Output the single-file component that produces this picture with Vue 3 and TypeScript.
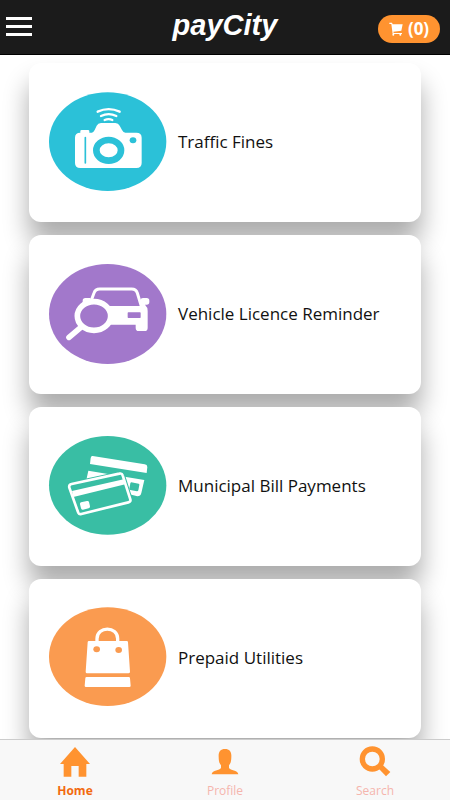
<script setup lang="ts">
import { ref } from 'vue'

interface Service {
  id: string
  title: string
  color: string
  viewBox: string
  cx: number
  cy: number
  rx: number
  ry: number
}

const services: Service[] = [
  { id: 'fines', title: 'Traffic Fines', color: '#2bc1d8', viewBox: '27 24 354 297', cx: 203, cy: 170, rx: 176, ry: 148 },
  { id: 'licence', title: 'Vehicle Licence Reminder', color: '#a278cb', viewBox: '27 30 354 297', cx: 203, cy: 177, rx: 176, ry: 150 },
  { id: 'bills', title: 'Municipal Bill Payments', color: '#39bea4', viewBox: '27 27 354 297', cx: 203, cy: 172, rx: 176, ry: 148 },
  { id: 'prepaid', title: 'Prepaid Utilities', color: '#fa9b50', viewBox: '27 27 354 297', cx: 203, cy: 170, rx: 176, ry: 148 },
]

const tabs = ['Home', 'Profile', 'Search']
const activeTab = ref('Home')
const cartCount = ref(0)
</script>

<template>
  <div class="app">
    <header class="topbar">
      <button class="menu" type="button" aria-label="Menu">
        <span></span><span></span><span></span>
      </button>
      <h1 class="brand">payCity</h1>
      <button class="cart" type="button" aria-label="Cart">
        <svg class="cart-icon" viewBox="0 0 42 42" aria-hidden="true">
          <path d="M1 2h8l2 5h30l-4 19-24 3 1 4h25v3H11L7 6H1z" fill="#fff" />
          <circle cx="13" cy="38" r="3" fill="#fff" />
          <circle cx="34" cy="38" r="3" fill="#fff" />
        </svg>
        <span>({{ cartCount }})</span>
      </button>
    </header>

    <main class="services">
      <a v-for="s in services" :key="s.id" class="card" :href="'#' + s.id">
        <svg class="badge" :viewBox="s.viewBox" aria-hidden="true">
          <ellipse :cx="s.cx" :cy="s.cy" :rx="s.rx" :ry="s.ry" :fill="s.color" />
          <g v-if="s.id === 'fines'">
            <g fill="none" stroke="#fff" stroke-width="7" stroke-linecap="round">
              <path d="M173 80q33-15 66 0" />
              <path d="M183 93q23-11 46 0" />
              <path d="M194 105q12-5 23 0" />
            </g>
            <path d="M121 143v-5q0-3 4-3h19q4 0 4 3v5h8q5-1 8-8l6-13q4-8 13-8h43q9 0 13 8l7 13q4 8 10 8h33q16 0 16 15v76q0 15-16 15H121q-16 0-16-15v-76q0-15 16-15z" fill="#fff" />
            <path d="M136 158v76" fill="none" :stroke="s.color" stroke-width="5" stroke-linecap="round" />
            <ellipse cx="206" cy="196" rx="37" ry="31" fill="#fff" :stroke="s.color" stroke-width="20" />
            <ellipse cx="279" cy="166" rx="10" ry="9" :fill="s.color" />
          </g>
          <g v-else-if="s.id === 'licence'">
            <path d="M154 136l8-22q4-12 17-12h96q13 0 17 12l12 40" fill="none" stroke="#fff" stroke-width="9" />
            <path d="M128 150v-13q0-8 8-8h15l5 9-24 15zM302 133q2-4 8-4h10q8 0 8 8v4q0 8-8 8h-5q8 7 8 19v50q0 10-9 10h-18q-9 0-9-10v-9h-82v-56h95z" fill="#fff" />
            <path d="M265 172h35q2 0 2 2v13q0 2-2 2h-35q-2 0-2-2v-13q0-2 2-2z" :fill="s.color" />
            <path d="M126 214l-39 33" stroke="#fff" stroke-width="17" stroke-linecap="round" />
            <ellipse cx="162" cy="183" rx="50" ry="43" :fill="s.color" stroke="#fff" stroke-width="17" />
          </g>
          <g v-else-if="s.id === 'bills'">
            <path d="M158 84l156 25q8 1 8 8l-2 18-170-27 2-18q1-7 6-6zM145 128l168 28-9 39q-2 10-12 10l-155-40z" fill="#fff" />
            <path d="M274 163l22 4q3 1 2 4l-3 16q-1 3-4 3l-20-4q-4-1-3-4l3-16q1-3 3-3z" :fill="s.color" />
            <path d="M95 168l143-31q8-2 10 5l23 72q2 7-6 9l-141 35q-8 2-10-6L88 179q-2-9 7-11z" :fill="s.color" :stroke="s.color" stroke-width="14" />
            <path d="M95 168l143-31q8-2 10 5l23 72q2 7-6 9l-141 35q-8 2-10-6L88 179q-2-9 7-11z" :fill="s.color" stroke="#fff" stroke-width="8" />
            <path d="M96 189l155-35 5 15-156 38z" fill="#fff" />
            <path d="M123 223l18-4q5-1 6 3l3 13q1 5-4 6l-17 4q-5 1-6-4l-3-12q-1-5 3-6z" fill="#fff" />
          </g>
          <g v-else>
            <path d="M171 128v-12c0-38 62-38 62 0v12" fill="none" stroke="#fff" stroke-width="10" />
            <path d="M147 123h113q4 0 4 4l6 88q0 5-5 5H141q-4 0-4-5l6-88q0-4 4-4zM140 231h126q4 0 4 4l2 22q0 4-4 4H138q-4 0-4-4l2-22q0-4 4-4z" fill="#fff" />
            <ellipse cx="170" cy="148" rx="10" ry="9" :fill="s.color" />
            <ellipse cx="236" cy="150" rx="10" ry="9" :fill="s.color" />
          </g>
        </svg>
        <span class="title">{{ s.title }}</span>
      </a>
    </main>

    <nav class="tabs">
      <button
        v-for="tab in tabs"
        :key="tab"
        type="button"
        class="tab"
        :class="{ active: tab === activeTab }"
        @click="activeTab = tab"
      >
        <svg class="tab-icon" viewBox="0 0 96 96" aria-hidden="true">
          <path v-if="tab === 'Home'" d="M48 3l45 51H82v38H59V60H37v32H14V54H3z" />
          <path v-else-if="tab === 'Profile'" d="M48 9c14 0 20 9 19 23 0 13-2 20-7 26v8c4 8 26 5 28 19H8c2-14 24-11 28-19v-8c-5-6-7-13-7-26C28 18 34 9 48 9z" />
          <g v-else>
            <circle cx="40" cy="39" r="30" fill="none" stroke="#ff9330" stroke-width="16" />
            <path d="M55 64l12-11 27 25-13 13z" />
          </g>
        </svg>
        <span>{{ tab }}</span>
      </button>
    </nav>
  </div>
</template>

<style>
body {
  margin: 0;
  background: #fff;
}
</style>

<style scoped>
.app {
  display: flex;
  flex-direction: column;
  min-height: 100vh;
  font-family: "Open Sans", "Noto Sans", sans-serif;
  color: #111;
}

button {
  border: 0;
  padding: 0;
  background: none;
  font-family: inherit;
  cursor: pointer;
}

.topbar {
  position: sticky;
  top: 0;
  z-index: 2;
  box-sizing: border-box;
  height: 55px;
  display: grid;
  grid-template-columns: 1fr auto 1fr;
  align-items: start;
  padding: 0 6px;
  background: #1b1b1b;
  border-bottom: 1px solid #000;
}

.menu {
  display: flex;
  flex-direction: column;
  gap: 5px;
  width: 26px;
  padding-top: 17px;
}

.menu span {
  height: 3px;
  background: #fff;
}

.brand {
  margin: 0;
  padding-top: 8px;
  font: italic bold 29px/34px "Liberation Sans", Arial, sans-serif;
  color: #fff;
}

.cart {
  justify-self: end;
  display: flex;
  align-items: center;
  justify-content: center;
  gap: 5px;
  width: 62px;
  height: 28px;
  margin: 15px 4px 0 0;
  border-radius: 14px;
  background: #ff9330;
  color: #fff;
  font-size: 17px;
  font-weight: 700;
  line-height: 28px;
}

.cart-icon {
  width: 14px;
  height: 14px;
}

.services {
  flex: 1;
  display: flex;
  flex-direction: column;
  gap: 13px;
  padding: 8px 29px 1px;
  overflow: hidden;
}

.card {
  position: relative;
  box-sizing: border-box;
  height: 159px;
  display: flex;
  align-items: center;
  gap: 11px;
  padding: 0 20px;
  border-radius: 12px;
  background: #fff;
  box-shadow: 0 20px 26px rgba(0, 0, 0, 0.33);
  color: inherit;
  text-decoration: none;
}

.badge {
  flex: none;
  width: 118px;
  height: 99px;
  overflow: visible;
}

.title {
  padding-bottom: 2px;
  font-size: 17px;
  line-height: 24px;
}

.tabs {
  position: sticky;
  bottom: 0;
  z-index: 2;
  box-sizing: border-box;
  height: 61px;
  display: grid;
  grid-template-columns: repeat(3, 1fr);
  background: #f8f8f8;
  border-top: 1px solid #ccc;
}

.tab {
  display: flex;
  flex-direction: column;
  align-items: center;
  gap: 4px;
  padding-top: 6px;
  font-size: 12px;
  line-height: 18px;
  color: #f5b5ad;
}

.tab.active {
  color: #f26a10;
  font-weight: 700;
}

.tab-icon {
  width: 32px;
  height: 32px;
  fill: #ff9330;
}
</style>
